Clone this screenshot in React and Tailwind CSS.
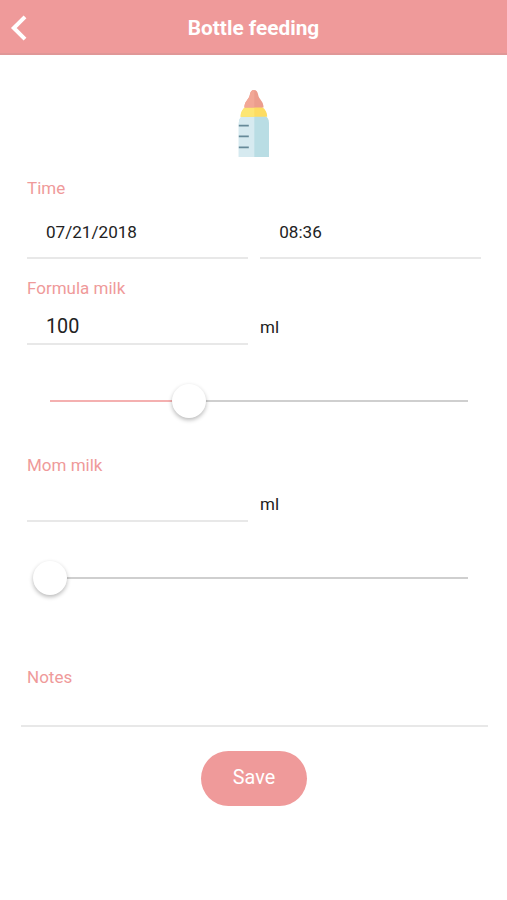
import { useState } from 'react';

const BottleIcon = () => (
    <svg width="32" height="67" viewBox="0 0 32 67" aria-hidden="true">
        {/* body */}
        <path d="M.8 67V33c0-3.500 1.700-6 4.200-7h22c2.500 1 4 3.500 4 7v34z" fill="#b9dde4" />
        <path d="M.8 67V33c0-3.500 1.700-6 4.200-7h11.300v41z" fill="#d6eaf0" />
        {/* collar */}
        <path d="M2.600 26.800c0-4 1.600-7.700 5-9.800h16.400c3.400 2.100 5.200 5.800 5.200 9.800z" fill="#fddc62" />
        <path d="M2.600 26.800c0-4 1.600-7.700 5-9.800h8.700v9.800z" fill="#fde673" />
        {/* nipple */}
        <path d="M16 0c-2.400 0-3.700 2-4.100 4.600-.7 5-5.500 6.400-5.500 12.900h19.200c0-6.500-4.800-7.900-5.500-12.900C19.700 2 18.400 0 16 0z" fill="#ec9d8d" />
        <path d="M16.300 0c-2.700 0-4 2-4.400 4.600-.7 5-5.500 6.400-5.500 12.900h9.900z" fill="#f2a796" />
        <path d="M.8 35.700h10M.8 46.400h10M.8 57.400h10" stroke="#668a99" strokeWidth="1.800" />
    </svg>
);

const Slider = ({ value, max, onChange }) => {
    const percent = (value / max) * 100;

    return (
        <div className="relative mr-[13px] ml-[23px] h-[34px]">
            <div className="flex h-full items-center">
                <div className="h-[2px] w-full bg-[#cfcfcf]">
                    <div className="h-full bg-[#f4b0b0]" style={{ width: `${percent}%` }} />
                </div>
            </div>
            <div
                className="absolute top-0 h-[34px] w-[34px] -translate-x-1/2 rounded-full bg-white shadow-[0_2px_4px_rgba(0,0,0,0.28)]"
                style={{ left: `${percent}%` }}
            />
            <input
                type="range"
                min={0}
                max={max}
                value={value}
                onChange={(e) => onChange(Number(e.target.value))}
                className="absolute inset-0 h-full w-full cursor-pointer opacity-0"
            />
        </div>
    );
};

const MilkField = ({ label, value, onChange }) => (
    <section className="h-[177px]">
        <h2 className="h-6 text-[17px] leading-6 text-[#ef9a9a]">{label}</h2>
        <div className="flex h-11 gap-3">
            <input
                value={value || ''}
                onChange={(e) => onChange(Number(e.target.value) || 0)}
                className="h-[45px] w-[221px] border-b-2 border-[#e8e8e8] pt-[10px] pl-[19px] text-[19.8px] text-[#222] outline-none"
            />
            <span className="pt-[15px] text-[17px] leading-6 text-[#222]">ml</span>
        </div>
        <div className="pt-10">
            <Slider value={value} max={300} onChange={onChange} />
        </div>
    </section>
);

export default function App() {
    const [formula, setFormula] = useState(100);
    const [momMilk, setMomMilk] = useState(0);
    const [notes, setNotes] = useState('');

    return (
        <div className="h-[900px] w-full overflow-hidden bg-white font-['Roboto',sans-serif]">
            <header className="grid h-[55px] grid-cols-[60px_1fr_60px] items-center border-b-2 border-[#e09797] bg-[#ef9a9a] text-white">
                <button type="button" aria-label="Back" className="pt-[2px] pl-[10px]">
                    <svg width="18" height="28" viewBox="0 0 18 28" fill="none" stroke="white" strokeWidth="4">
                        <path d="M15 2.800 3.800 14 15 25.200" />
                    </svg>
                </button>
                <h1 className="pt-1 text-center text-[20.8px] font-bold">Bottle feeding</h1>
            </header>

            <main className="pr-[26px] pl-[27px]">
                <div className="flex h-[121px] justify-center pt-[35px]">
                    <BottleIcon />
                </div>

                <section className="h-[100px]">
                    <h2 className="h-6 text-[17px] leading-6 text-[#ef9a9a]">Time</h2>
                    <div className="flex gap-3 text-[17.1px] leading-6 text-[#222]">
                        <div className="h-[59px] flex-1 border-b-2 border-[#e8e8e8] pt-5 pl-[19px]">07/21/2018</div>
                        <div className="h-[59px] flex-1 border-b-2 border-[#e8e8e8] pt-5 pl-[19.5px]">08:36</div>
                    </div>
                </section>

                <MilkField label="Formula milk" value={formula} onChange={setFormula} />
                <MilkField label="Mom milk" value={momMilk} onChange={setMomMilk} />

                <section className="pt-[35px]">
                    <h2 className="h-6 text-[17px] leading-6 text-[#ef9a9a]">Notes</h2>
                    <input
                        value={notes}
                        onChange={(e) => setNotes(e.target.value)}
                        className="-ml-[6px] h-[38px] w-[467px] border-b-2 border-[#e8e8e8] px-[6px] text-[17px] outline-none"
                    />
                </section>

                <div className="flex justify-center pt-6">
                    <button type="button" className="h-[55px] w-[106px] rounded-full bg-[#ef9a9a] pb-px text-[19.8px] text-white">
                        Save
                    </button>
                </div>
            </main>
        </div>
    );
}
